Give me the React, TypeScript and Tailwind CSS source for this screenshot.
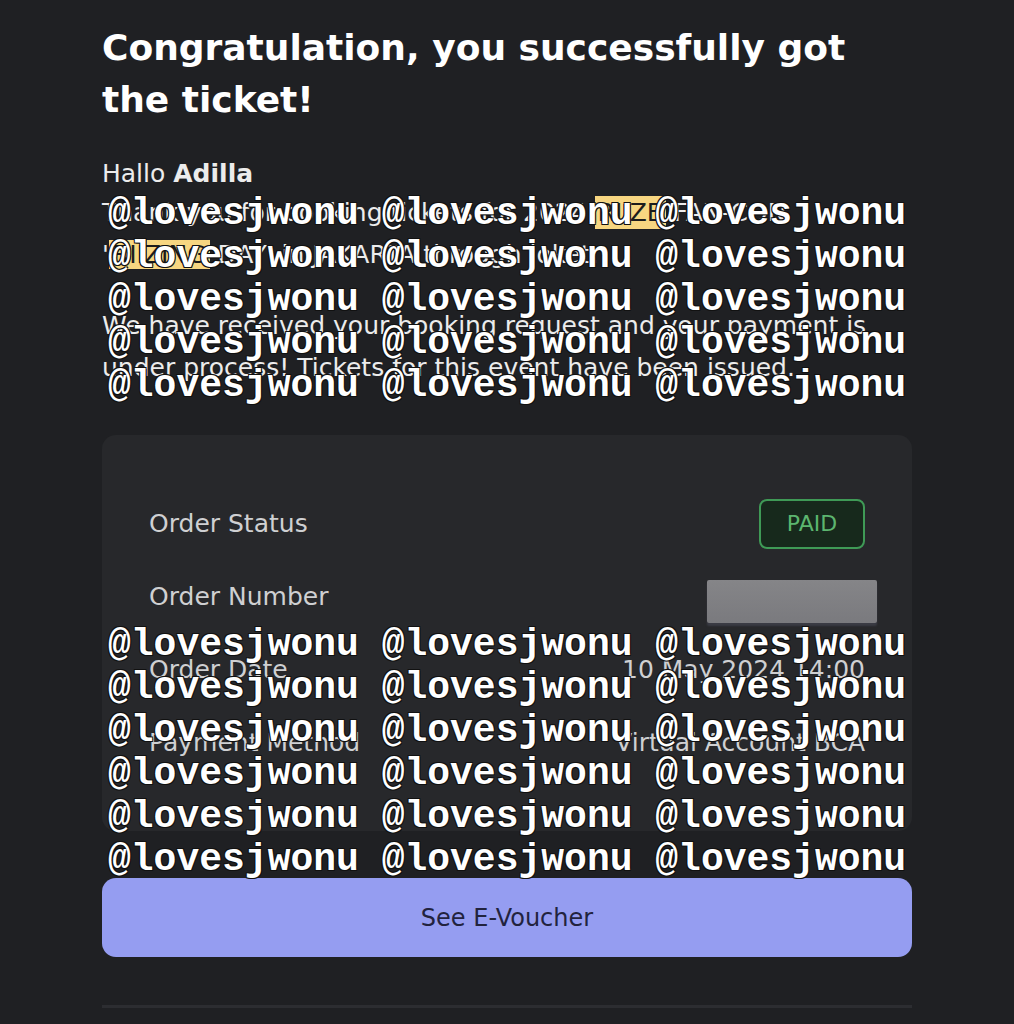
const rows = [
  { label: "Order Date", value: "10 May 2024 14:00" },
  { label: "Payment Method", value: "Virtual Account BCA" },
];

const mark = "@lovesjwonu @lovesjwonu @lovesjwonu";

function Watermark({ top, count }: { top: string; count: number }) {
  return (
    <div
      className={`pointer-events-none absolute left-[108px] ${top} whitespace-pre text-[38px] leading-[43px] font-bold text-white [font-family:'Courier_New','Nimbus_Mono_PS','FreeMono','Liberation_Mono',monospace] [text-shadow:1px_1px_0_#111,-1px_-1px_0_#111,1px_-1px_0_#111,-1px_1px_0_#111]`}
    >
      {Array.from({ length: count }).map((_, i) => (
        <div key={i}>{mark}</div>
      ))}
    </div>
  );
}

export default function App() {
  return (
    <div className="relative min-h-[1024px] bg-[#1f2023] [font-family:'DejaVu_Sans',sans-serif]">
      <div className="mx-auto w-[810px] pt-[22px] pb-4">
        <h1 className="text-[36px] leading-[52px] font-bold text-white">
          Congratulation, you successfully got
          <br />
          the ticket!
        </h1>

        <p className="mt-[30px] text-[25px] leading-[36px] text-[#ececec]">
          Hallo <span className="font-bold">Adilla</span>
        </p>
        <p className="text-[25px] leading-[42px] text-[#ececec]">
          Thank you for booking tickets for 2024{" "}
          <span className="bg-[#f7d681] px-[3px] py-[2px] text-[#1c1c1c]">RIIZE</span> FAN-CON
          <br />'
          <span className="bg-[#f7d681] px-[3px] text-[#1c1c1c]">RIIZING</span> DAY' in JAKARTA through loket.
        </p>
        <p className="mt-[29px] text-[25px] leading-[42px] text-[#ececec]">
          We have received your booking request and your payment is under process! Tickets for this event have been issued.
        </p>

        <div className="mt-[46px] rounded-[14px] bg-[#27282b] px-[47px] pt-[52px] pb-[52px] text-[25px] text-[#cfd0d2]">
          <div className="flex h-[73px] items-center justify-between">
            <span>Order Status</span>
            <span className="flex h-[50px] w-[106px] items-center justify-center rounded-[8px] border-2 border-[#3f9a56] bg-[#17291c] text-[22px] text-[#5cb56f]">
              PAID
            </span>
          </div>
          <div className="flex h-[73px] items-center justify-between">
            <span>Order Number</span>
            <span className="-mr-[12px] mb-[10px] h-[43px] w-[170px] self-end rounded-[2px] bg-gradient-to-b from-[#858588] to-[#7a7a7e] shadow-[0_3px_2px_#3a3b44]" />
          </div>
          {rows.map((r) => (
            <div key={r.label} className="flex h-[73px] items-center justify-between">
              <span>{r.label}</span>
              <span>{r.value}</span>
            </div>
          ))}
        </div>

        <button className="mt-[47px] flex h-[79px] w-full items-center justify-center rounded-[14px] bg-[#959df1] text-[24px] text-[#22233e]">
          See E-Voucher
        </button>

        <div className="mt-[48px] h-[3px] bg-[#2c2d31]" />
      </div>

      <Watermark top="top-[192px]" count={5} />
      <Watermark top="top-[623px]" count={6} />
    </div>
  );
}
